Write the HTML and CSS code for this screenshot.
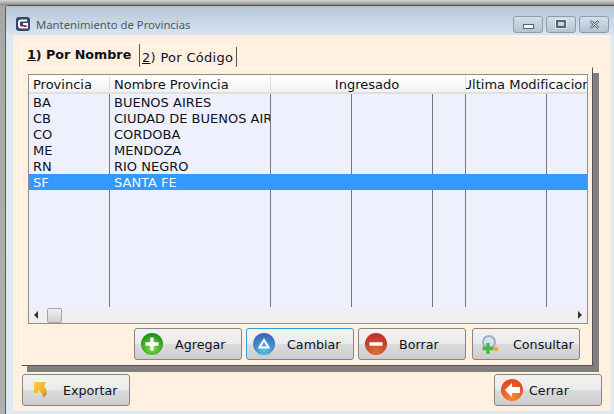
FILE: index.html
```html
<!DOCTYPE html>
<html lang="es">
<head>
    <meta charset="UTF-8">
    <meta name="viewport" content="width=device-width, initial-scale=1.0">
    <title>Mantenimiento de Provincias</title>
    <link rel="stylesheet" href="styles.css">
</head>
<body>
    <svg class="defs" width="0" height="0">
        <defs>
            <radialGradient id="gGreen" cx="50%" cy="70%" r="65%"><stop offset="0" stop-color="#7fe04a"/><stop offset="1" stop-color="#1f8f1a"/></radialGradient>
            <radialGradient id="gBlue" cx="50%" cy="80%" r="70%"><stop offset="0" stop-color="#58c0e8"/><stop offset="1" stop-color="#3a6cb8"/></radialGradient>
            <radialGradient id="gRed" cx="50%" cy="85%" r="75%"><stop offset="0" stop-color="#e0702a"/><stop offset="1" stop-color="#bc3232"/></radialGradient>
            <radialGradient id="gOrange" cx="50%" cy="80%" r="70%"><stop offset="0" stop-color="#fb8a3a"/><stop offset="1" stop-color="#e04a1c"/></radialGradient>
            <linearGradient id="gYellow" x1="0" y1="0" x2="1" y2="1"><stop offset="0" stop-color="#ffd23c"/><stop offset="0.75" stop-color="#eea81c"/><stop offset="1" stop-color="#6c5c34"/></linearGradient>
        </defs>
    </svg>
    <div class="window">
        <div class="titlebar">
            <svg class="app-icon" width="14" height="14" viewBox="0 0 14 14">
                <rect x="0" y="0" width="14" height="14" rx="3" fill="#36476e"/>
                <path d="M11 3.500H5Q3 3.500 3 5.500V8.500Q3 10.500 5 10.500H11V7H7" fill="none" stroke="#fff" stroke-width="2"/>
                <rect x="8" y="8.500" width="3" height="1.500" fill="#e03030"/>
            </svg>
            <span class="title">Mantenimiento de Provincias</span>
            <div class="caption-buttons">
                <div class="caption-btn"><span class="min-glyph"></span></div>
                <div class="caption-btn"><span class="max-glyph"></span></div>
                <div class="caption-btn">
                    <svg width="11" height="9" viewBox="0 0 11 9"><path d="M1.500 1L9.500 8M9.500 1L1.500 8" stroke="#5a6470" stroke-width="2.400"/><path d="M1.500 1L9.500 8M9.500 1L1.500 8" stroke="#f4f6f8" stroke-width="1"/></svg>
                </div>
            </div>
        </div>
        <div class="client">
            <div class="tabs">
                <div class="tab active"><u>1</u>) Por Nombre</div>
                <div class="tab"><u>2</u>) Por Código</div>
            </div>
            <div class="panel">
                <div class="grid">
                    <div class="grid-head">
                        <div class="head-cell">Provincia</div>
                        <div class="head-cell">Nombre Provincia</div>
                        <div class="head-cell center">Ingresado</div>
                        <div class="head-cell center last"><span>Ultima Modificacion</span></div>
                    </div>
                    <div class="grid-body">
                        <div class="row"><div>BA</div><div>BUENOS AIRES</div><div></div><div></div><div></div><div></div><div></div></div>
                        <div class="row"><div>CB</div><div>CIUDAD DE BUENOS AIRES</div><div></div><div></div><div></div><div></div><div></div></div>
                        <div class="row"><div>CO</div><div>CORDOBA</div><div></div><div></div><div></div><div></div><div></div></div>
                        <div class="row"><div>ME</div><div>MENDOZA</div><div></div><div></div><div></div><div></div><div></div></div>
                        <div class="row"><div>RN</div><div>RIO NEGRO</div><div></div><div></div><div></div><div></div><div></div></div>
                        <div class="row selected"><div>SF</div><div>SANTA FE</div><div></div><div></div><div></div><div></div><div></div></div>
                        <div class="row filler"><div></div><div></div><div></div><div></div><div></div><div></div><div></div></div>
                    </div>
                    <div class="scrollbar">
                        <span class="arrow left"></span>
                        <span class="thumb"></span>
                        <span class="arrow right"></span>
                    </div>
                </div>
                <div class="actions">
                    <button class="btn" type="button">
                        <svg class="icon" width="24" height="24" viewBox="0 0 24 24"><circle cx="12" cy="12" r="11" fill="url(#gGreen)"/><path d="M12 5.500V18.500M5.500 12H18.500" stroke="#fff" stroke-width="3.400"/></svg>
                        <span>Agregar</span>
                    </button>
                    <button class="btn focused" type="button">
                        <svg class="icon" width="24" height="24" viewBox="0 0 24 24"><circle cx="12" cy="12" r="11" fill="url(#gBlue)"/><path d="M12 8L16.500 15.500H7.500Z" fill="none" stroke="#fff" stroke-width="2"/></svg>
                        <span>Cambiar</span>
                    </button>
                    <button class="btn" type="button">
                        <svg class="icon" width="24" height="24" viewBox="0 0 24 24"><circle cx="12" cy="12" r="11" fill="url(#gRed)"/><path d="M5.500 12H18.500" stroke="#fff" stroke-width="3.400"/></svg>
                        <span>Borrar</span>
                    </button>
                    <button class="btn consult" type="button">
                        <svg class="icon" width="24" height="24" viewBox="0 0 24 24">
                            <circle cx="11" cy="10" r="6" fill="#cfe6f2" stroke="#a4adb4" stroke-width="2"/>
                            <circle cx="18" cy="17" r="2.200" fill="#f5a623"/>
                            <path d="M10 11V22M4.500 16.500H15.500" stroke="#46b83c" stroke-width="3.400"/>
                        </svg>
                        <span>Consultar</span>
                    </button>
                </div>
            </div>
            <div class="footer">
                <button class="btn" type="button">
                    <svg class="icon" width="24" height="24" viewBox="0 0 24 24">
                        <path d="M6 4H18L16 8L18.500 12V16L15.500 19.500L13.500 15L11 11.500L9.500 15L6 15Z" fill="url(#gYellow)"/>
                    </svg>
                    <span>Exportar</span>
                </button>
                <button class="btn close" type="button">
                    <svg class="icon" width="24" height="24" viewBox="0 0 24 24"><circle cx="12" cy="12" r="11" fill="url(#gOrange)"/><path d="M12 5L5 12L12 19V15H20V9H12Z" fill="#fff"/></svg>
                    <span>Cerrar</span>
                </button>
            </div>
        </div>
    </div>
</body>
</html>
```

FILE: styles.css
```css
* {
    margin: 0;
    padding: 0;
    box-sizing: border-box;
}

html, body {
    width: 614px;
    height: 414px;
    overflow: hidden;
}

body {
    font-family: "DejaVu Sans", Verdana, sans-serif;
    font-size: 13px;
    color: #101018;
    background: linear-gradient(180deg, #d8d8d8 0%, #8c8c8c 5px, #a8a8a8 6px, #b0b0b0 100%);
    padding: 5px 0 0 5px;
}

.defs {
    position: absolute;
}

.window {
    height: 409px;
    border-top: 1px solid #4a4a4a;
    border-left: 1px solid #5c5c5c;
    border-top-left-radius: 3px;
    background: #dce8f2;
    padding: 0 3px 3px 7px;
    display: flex;
    flex-direction: column;
}

.titlebar {
    height: 29px;
    margin: 0 -3px 0 -7px;
    padding: 7px 5px 0 10px;
    background: linear-gradient(180deg, #b4c5d6 0%, #d8e6f2 100%);
    display: flex;
    align-items: center;
    flex-shrink: 0;
}

.app-icon {
    margin-right: 6px;
}

.title {
    font-family: "Noto Sans", sans-serif;
    font-size: 11.3px;
    color: #50565e;
}

.caption-buttons {
    margin-left: auto;
    display: flex;
    gap: 3px;
}

.caption-btn {
    width: 30px;
    height: 17px;
    border: 1px solid #8a9cb0;
    border-radius: 3px;
    background: linear-gradient(180deg, #d4dfe9 0%, #b4c3d2 100%);
    display: flex;
    align-items: center;
    justify-content: center;
}

.min-glyph {
    width: 11px;
    height: 5px;
    margin-top: 4px;
    border: 1px solid #5a6470;
    background: #f4f6f8;
}

.max-glyph {
    width: 10px;
    height: 8px;
    border: 2px solid #5a6470;
    outline: 1px solid rgba(255, 255, 255, 0.5);
}

.client {
    flex: 1;
    background: #fff0e0;
    padding: 8px 9px 0 8px;
    display: flex;
    flex-direction: column;
}

.tabs {
    display: flex;
    height: 24px;
}

.tab {
    height: 21px;
    margin-top: 3px;
    padding: 3px 0 0 2px;
    width: 97px;
    background: #fff0e0;
    border-right: 1px solid #555;
    border-top: 1px solid #fff;
    border-radius: 2px 2px 0 0;
    white-space: nowrap;
    letter-spacing: 0.3px;
}

.tab.active {
    height: 24px;
    width: 119px;
    margin-top: 0;
    padding: 3px 0 0 5px;
    font-size: 12.7px;
    font-weight: bold;
    letter-spacing: 0;
    border-left: 1px solid #fff;
}

.panel {
    height: 299px;
    width: 572px;
    border-top: 1px solid #fff;
    border-left: 1px solid #fff;
    border-bottom: 1px solid #555;
    border-right: 1px solid #555;
    box-shadow: 6px 6px 0 #808080;
    padding: 6px 4px 4px 6px;
    display: flex;
    flex-direction: column;
    background: #fff0e0;
}

.grid {
    height: 250px;
    flex-shrink: 0;
    border: 1px solid #8e8e8e;
    display: flex;
    flex-direction: column;
    background: #eef0fe;
}

.grid-head {
    display: grid;
    grid-template-columns: 81px 161px 195px 1fr;
    height: 19px;
    flex-shrink: 0;
    background: linear-gradient(180deg, #ffffff 0%, #f0f0f0 100%);
    box-shadow: inset 0 -2px 0 #e0e0e0;
}

.head-cell {
    padding: 1px 0 0 4px;
    line-height: 18px;
    border-right: 1px solid #e0e0e0;
    white-space: nowrap;
    overflow: hidden;
}

.head-cell.center {
    padding-left: 0;
    padding-right: 2px;
    text-align: center;
}

.head-cell.last {
    padding-right: 0;
    border-right: none;
    display: flex;
    justify-content: center;
}

.head-cell.last span {
    flex-shrink: 0;
}

.grid-body {
    flex: 1;
    display: flex;
    flex-direction: column;
    min-height: 0;
}

.row {
    display: grid;
    grid-template-columns: 81px 161px 81px 81px 33px 81px 1fr;
    height: 16px;
    line-height: 18px;
    flex-shrink: 0;
}

.row div {
    padding-left: 4px;
    border-right: 1px solid #777;
    white-space: nowrap;
    overflow: hidden;
}

.row div:last-child {
    border-right: none;
}

.row.selected {
    background: #3399ff;
    color: #f0f6ff;
}

.row.selected div {
    border-right-color: #3399ff;
}

.row.filler {
    flex: 1;
}

.scrollbar {
    height: 16px;
    flex-shrink: 0;
    background: #efefef;
    display: flex;
    align-items: center;
    padding: 0 5px;
}

.arrow {
    width: 0;
    height: 0;
    border-top: 4px solid transparent;
    border-bottom: 4px solid transparent;
}

.arrow.left {
    border-right: 4px solid #333;
}

.arrow.right {
    border-left: 4px solid #333;
    margin-left: auto;
}

.thumb {
    width: 15px;
    height: 15px;
    margin-left: 9px;
    border: 1px solid #a8a8a8;
    border-radius: 2px;
    background: linear-gradient(180deg, #f0f0f0 0%, #d0d0d0 100%);
}

.actions {
    display: flex;
    padding: 4px 0 0 106px;
    gap: 4px;
}

.btn {
    width: 108px;
    height: 32px;
    flex-shrink: 0;
    border: 1px solid #868686;
    border-radius: 3px;
    background: linear-gradient(180deg, #f2f2f2 0%, #ebebeb 50%, #dcdcdc 50%, #cdcdcd 100%);
    font-family: inherit;
    font-size: 12.7px;
    color: #101018;
    display: flex;
    align-items: center;
    padding-left: 5px;
}

.btn span {
    margin-left: 11px;
}

.btn.focused {
    border-color: #2aa0dc;
}

.btn.consult {
    margin-left: 2px;
}

.btn.close span {
    margin-left: 5px;
}

.footer {
    display: flex;
    justify-content: space-between;
    margin-top: 8px;
    padding: 0 0 0 1px;
}
```
